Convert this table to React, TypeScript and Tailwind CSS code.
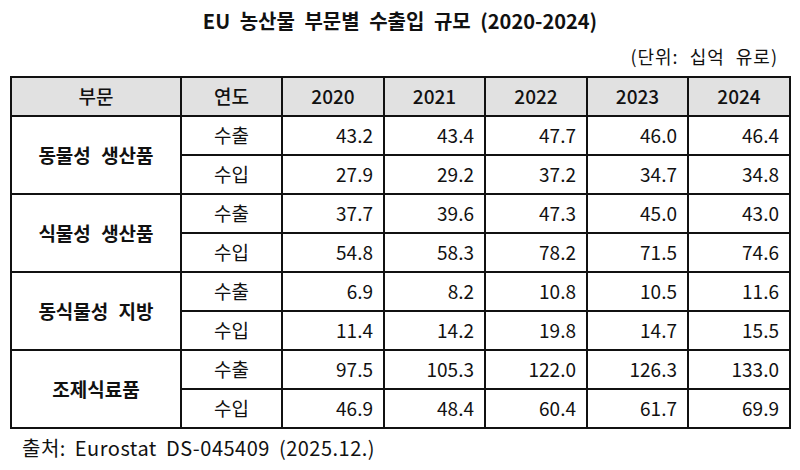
const rows = [
  { name: '동물성 생산품', ex: ['43.2', '43.4', '47.7', '46.0', '46.4'], im: ['27.9', '29.2', '37.2', '34.7', '34.8'] },
  { name: '식물성 생산품', ex: ['37.7', '39.6', '47.3', '45.0', '43.0'], im: ['54.8', '58.3', '78.2', '71.5', '74.6'] },
  { name: '동식물성 지방', ex: ['6.9', '8.2', '10.8', '10.5', '11.6'], im: ['11.4', '14.2', '19.8', '14.7', '15.5'] },
  { name: '조제식료품', ex: ['97.5', '105.3', '122.0', '126.3', '133.0'], im: ['46.9', '48.4', '60.4', '61.7', '69.9'] },
]

const years = ['2020', '2021', '2022', '2023', '2024']

export default function App() {
  return (
    <div className="w-[800px] h-[470px] bg-white text-[#111] font-['Noto_Sans_CJK_KR','Noto_Sans',sans-serif]">
      {/* Title */}
      <h1 className="pt-[8px] text-center text-[20px] font-semibold leading-[26px] [word-spacing:5px]">
        EU 농산물 부문별 수출입 규모 (2020-2024)
      </h1>
      <p className="mt-[11px] pr-[22px] text-right text-[18px] leading-[22px] tracking-[1px] [word-spacing:6px]">
        (단위: 십억 유로)
      </p>

      <table className="ml-[10px] mt-[9px] w-[779px] table-fixed border-collapse border-2 border-[#111] text-[19px]">
        <colgroup>
          <col className="w-[170px]" />
          <col className="w-[101px]" />
          <col className="w-[102px]" />
          <col className="w-[101px]" />
          <col className="w-[102px]" />
          <col className="w-[101px]" />
          <col className="w-[102px]" />
        </colgroup>
        <thead>
          <tr className="h-[39px] bg-[#e1e1e1]">
            <th className="border-2 border-[#111] font-medium">부문</th>
            <th className="border-2 border-[#111] font-medium">연도</th>
            {years.map((y) => (
              <th key={y} className="border-2 border-[#111] font-medium">{y}</th>
            ))}
          </tr>
        </thead>
        <tbody>
          {rows.map((r) => (
            <>
              <tr key={r.name + 'ex'} className="h-[39px]">
                <td rowSpan={2} className="border-2 border-[#111] text-center font-bold text-[19px] [word-spacing:6px]">
                  {r.name}
                </td>
                <td className="border-2 border-[#111] text-center">수출</td>
                {r.ex.map((v, i) => (
                  <td key={i} className="border-2 border-[#111] pr-[10px] text-right">{v}</td>
                ))}
              </tr>
              <tr key={r.name + 'im'} className="h-[39px]">
                <td className="border-2 border-[#111] text-center">수입</td>
                {r.im.map((v, i) => (
                  <td key={i} className="border-2 border-[#111] pr-[10px] text-right">{v}</td>
                ))}
              </tr>
            </>
          ))}
        </tbody>
      </table>

      <p className="mt-[4px] pl-[22px] text-[20px] leading-[30px] tracking-[0.5px] [word-spacing:4px]">
        출처: Eurostat DS-045409 (2025.12.)
      </p>
    </div>
  )
}
